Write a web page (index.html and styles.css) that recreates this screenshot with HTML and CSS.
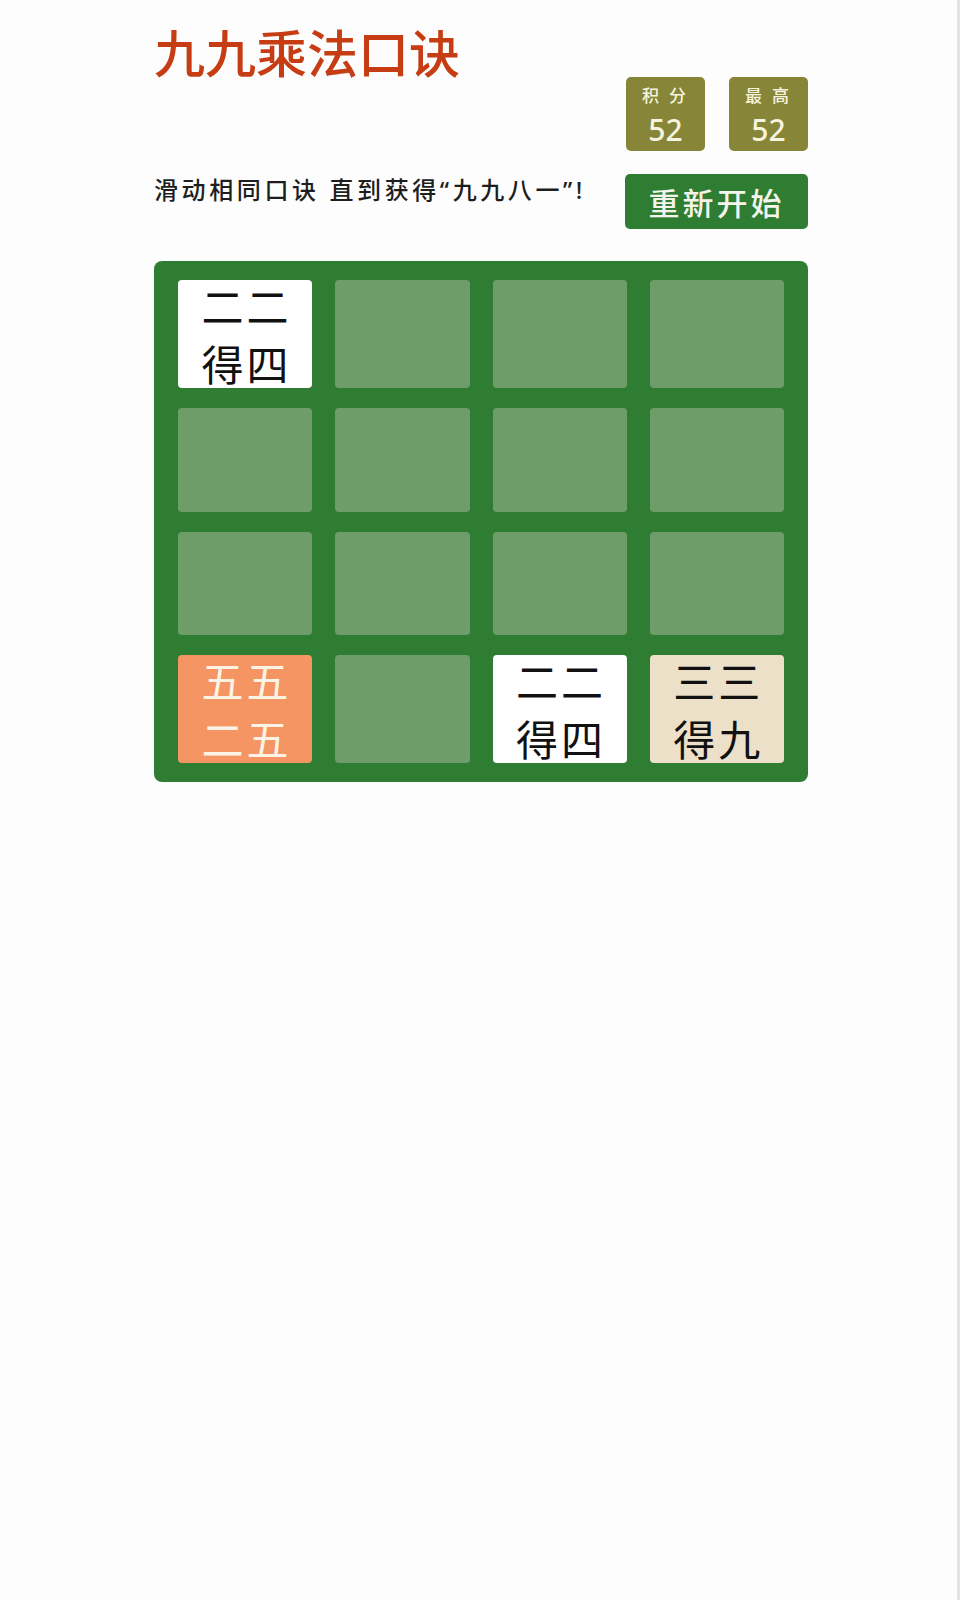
FILE: index.html
```html
<!DOCTYPE html>
<html lang="zh">
<head>
    <meta charset="UTF-8">
    <title>九九乘法口诀</title>
    <link rel="stylesheet" href="styles.css">
</head>
<body>
<div class="container-main">
    <h1 class="title">九九乘法口诀</h1>

    <div class="scores">
        <div class="score-box">
            <span class="score-label">积 分</span>
            <span class="score-value" id="score">52</span>
        </div>
        <div class="score-box">
            <span class="score-label">最 高</span>
            <span class="score-value" id="best">52</span>
        </div>
    </div>

    <div class="above-game">
        <p class="intro">滑动相同口诀 直到获得“九九八一”!</p>
        <button class="restart">重新开始</button>
    </div>

    <div class="board">
        <div class="tile tile-4"><span>二二</span><span>得四</span></div>
        <div class="tile"></div>
        <div class="tile"></div>
        <div class="tile"></div>

        <div class="tile"></div>
        <div class="tile"></div>
        <div class="tile"></div>
        <div class="tile"></div>

        <div class="tile"></div>
        <div class="tile"></div>
        <div class="tile"></div>
        <div class="tile"></div>

        <div class="tile tile-25"><span>五五</span><span>二五</span></div>
        <div class="tile"></div>
        <div class="tile tile-4"><span>二二</span><span>得四</span></div>
        <div class="tile tile-9"><span>三三</span><span>得九</span></div>
    </div>
</div>
</body>
</html>
```

FILE: styles.css
```css
html {
    height: 100%;
    box-sizing: border-box;
    border-right: 3px solid #e2e2e2;
    background: #fdfdfd;
}

body {
    margin: 0;
    font-family: "Noto Sans", "Noto Sans CJK SC", sans-serif;
    color: #222;
}

.container-main {
    width: 654px;
    margin-left: 154px;
    padding-top: 26px;
    display: flex;
    flex-direction: column;
}

.title {
    margin: 0;
    font-family: "Noto Sans CJK SC", sans-serif;
    font-size: 51px;
    line-height: 51px;
    font-weight: 500;
    color: #c63d14;
}

.scores {
    display: flex;
    justify-content: flex-end;
    gap: 24px;
}

.score-box {
    width: 79px;
    height: 74px;
    background: #878638;
    border-radius: 5px;
    display: flex;
    flex-direction: column;
    align-items: center;
    color: #f6f3df;
}

.score-label {
    font-family: "Noto Sans CJK SC", sans-serif;
    font-size: 17px;
    line-height: 20px;
    font-weight: 500;
    margin-top: 8px;
    letter-spacing: 3px;
}

.score-value {
    font-size: 30px;
    line-height: 34px;
    font-weight: 500;
    margin-top: 8px;
}

.above-game {
    display: flex;
    justify-content: space-between;
    align-items: flex-start;
    margin-top: 23px;
}

.intro {
    margin: 0;
    padding-top: 1px;
    font-size: 24px;
    line-height: 30px;
    letter-spacing: 3.6px;
    font-weight: 500;
    color: #1e1e1e;
}

.restart {
    width: 183px;
    height: 55px;
    margin: 0;
    border: none;
    border-radius: 5px;
    background: #2e7d32;
    color: #f4f4ec;
    font-family: "Noto Sans CJK SC", sans-serif;
    font-size: 31px;
    font-weight: 500;
    letter-spacing: 3px;
}

.board {
    margin-top: 32px;
    height: 521px;
    box-sizing: border-box;
    padding: 19px 24px;
    background: #2e7d32;
    border-radius: 8px;
    display: grid;
    grid-template-columns: repeat(4, 1fr);
    grid-template-rows: repeat(4, 1fr);
    column-gap: 23px;
    row-gap: 20px;
}

.tile {
    border-radius: 4px;
    background: #6f9d69;
    display: flex;
    flex-direction: column;
    justify-content: center;
    align-items: center;
    gap: 8px;
    font-family: "Noto Sans CJK SC", sans-serif;
    font-size: 42px;
    font-weight: 400;
    letter-spacing: 3px;
}

.tile span {
    display: block;
    line-height: 50px;
    padding-left: 3px;
}

.tile-4 {
    background: #ffffff;
    color: #111;
}

.tile-9 {
    background: #ede0c8;
    color: #111;
}

.tile-25 {
    background: #f59563;
    color: #fbf4e6;
}
```
